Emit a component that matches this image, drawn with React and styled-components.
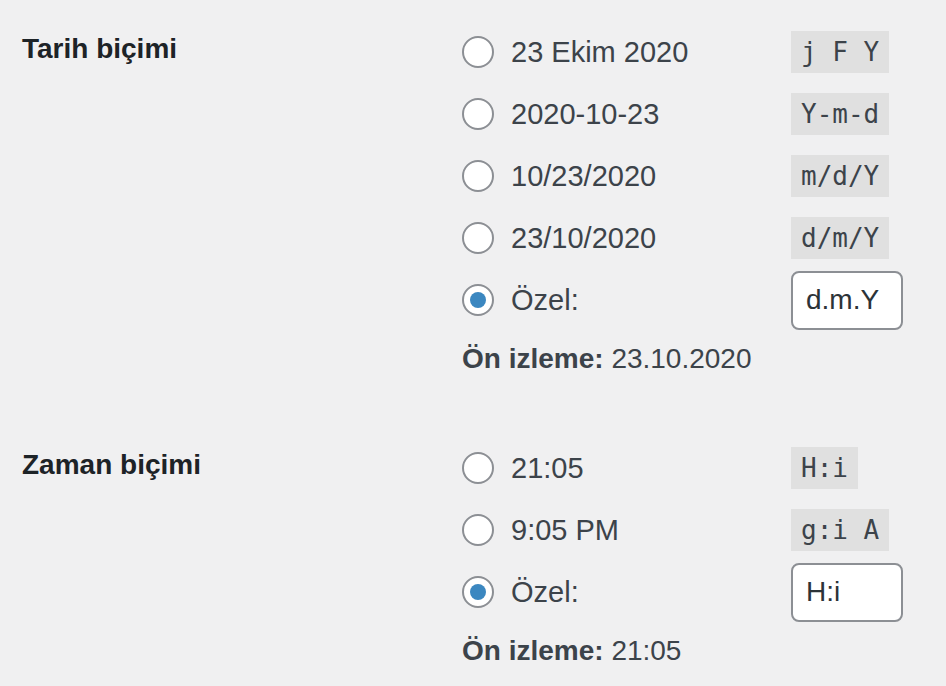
import React, { useState } from "react";
import styled, { createGlobalStyle } from "styled-components";

const GlobalStyle = createGlobalStyle`
  html, body {
    margin: 0;
    padding: 0;
    background: #f0f0f1;
  }
  body {
    font-family: "Liberation Sans", Arial, sans-serif;
    color: #3c434a;
  }
`;

const Page = styled.div`
  width: 946px;
  height: 686px;
  overflow: hidden;
  padding-top: 21px;
  box-sizing: border-box;
`;

const Section = styled.div`
  display: grid;
  grid-template-columns: 440px 1fr;
  padding-left: 22px;
  margin-bottom: ${(p) => p.gap || 0}px;
`;

const Heading = styled.div`
  font-size: 28px;
  font-weight: 700;
  color: #1d2327;
  line-height: 38px;
  padding-top: 9px;
`;

const Options = styled.div`
  display: flex;
  flex-direction: column;
`;

const Row = styled.label`
  display: flex;
  align-items: center;
  height: 62px;
  cursor: pointer;
`;

const Radio = styled.span`
  width: 32px;
  height: 32px;
  box-sizing: border-box;
  border: 2px solid #8c8f94;
  border-radius: 50%;
  background: #fff;
  margin-right: 17px;
  display: flex;
  align-items: center;
  justify-content: center;
  flex-shrink: 0;
  &::after {
    content: "";
    width: 16px;
    height: 16px;
    border-radius: 50%;
    background: #3b87c0;
    display: ${(p) => (p.checked ? "block" : "none")};
  }
`;

const OptionText = styled.span`
  font-size: 29px;
  min-width: 280px;
  display: inline-block;
  color: #3c434a;
`;

const Code = styled.code`
  font-family: "DejaVu Sans Mono", Menlo, monospace;
  font-size: 26px;
  background: #e0e0e0;
  color: #3c434a;
  padding: 0 10px;
  height: 42px;
  line-height: 42px;
  white-space: pre;
`;

const Input = styled.input`
  width: 112px;
  height: 59px;
  box-sizing: border-box;
  border: 2px solid #8c8f94;
  border-radius: 8px;
  background: #fff;
  font-family: "Liberation Sans", Arial, sans-serif;
  font-size: 28px;
  color: #2c3338;
  padding: 0 13px;
  outline: none;
`;

const Preview = styled.p`
  margin: 0;
  padding-top: 8px;
  font-size: 28px;
  line-height: 40px;
  color: #3c434a;
  strong {
    color: #3c434a;
    font-weight: 700;
  }
`;

function FormatField({ title, options, custom, preview, gap }) {
  const [value, setValue] = useState(custom);
  return (
    <Section gap={gap}>
      <Heading>{title}</Heading>
      <Options>
        {options.map(([label, code]) => (
          <Row key={code}>
            <Radio />
            <OptionText>{label}</OptionText>
            <Code>{code}</Code>
          </Row>
        ))}
        <Row>
          <Radio checked />
          <OptionText>Özel:</OptionText>
          <Input value={value} onChange={(e) => setValue(e.target.value)} />
        </Row>
        <Preview>
          <strong>Ön izleme:</strong> {preview}
        </Preview>
      </Options>
    </Section>
  );
}

export default function App() {
  return (
    <Page>
      <GlobalStyle />
      <FormatField
        title="Tarih biçimi"
        options={[
          ["23 Ekim 2020", "j F Y"],
          ["2020-10-23", "Y-m-d"],
          ["10/23/2020", "m/d/Y"],
          ["23/10/2020", "d/m/Y"],
        ]}
        custom="d.m.Y"
        preview="23.10.2020"
        gap={58}
      />
      <FormatField
        title="Zaman biçimi"
        options={[
          ["21:05", "H:i"],
          ["9:05 PM", "g:i A"],
        ]}
        custom="H:i"
        preview="21:05"
      />
    </Page>
  );
}
